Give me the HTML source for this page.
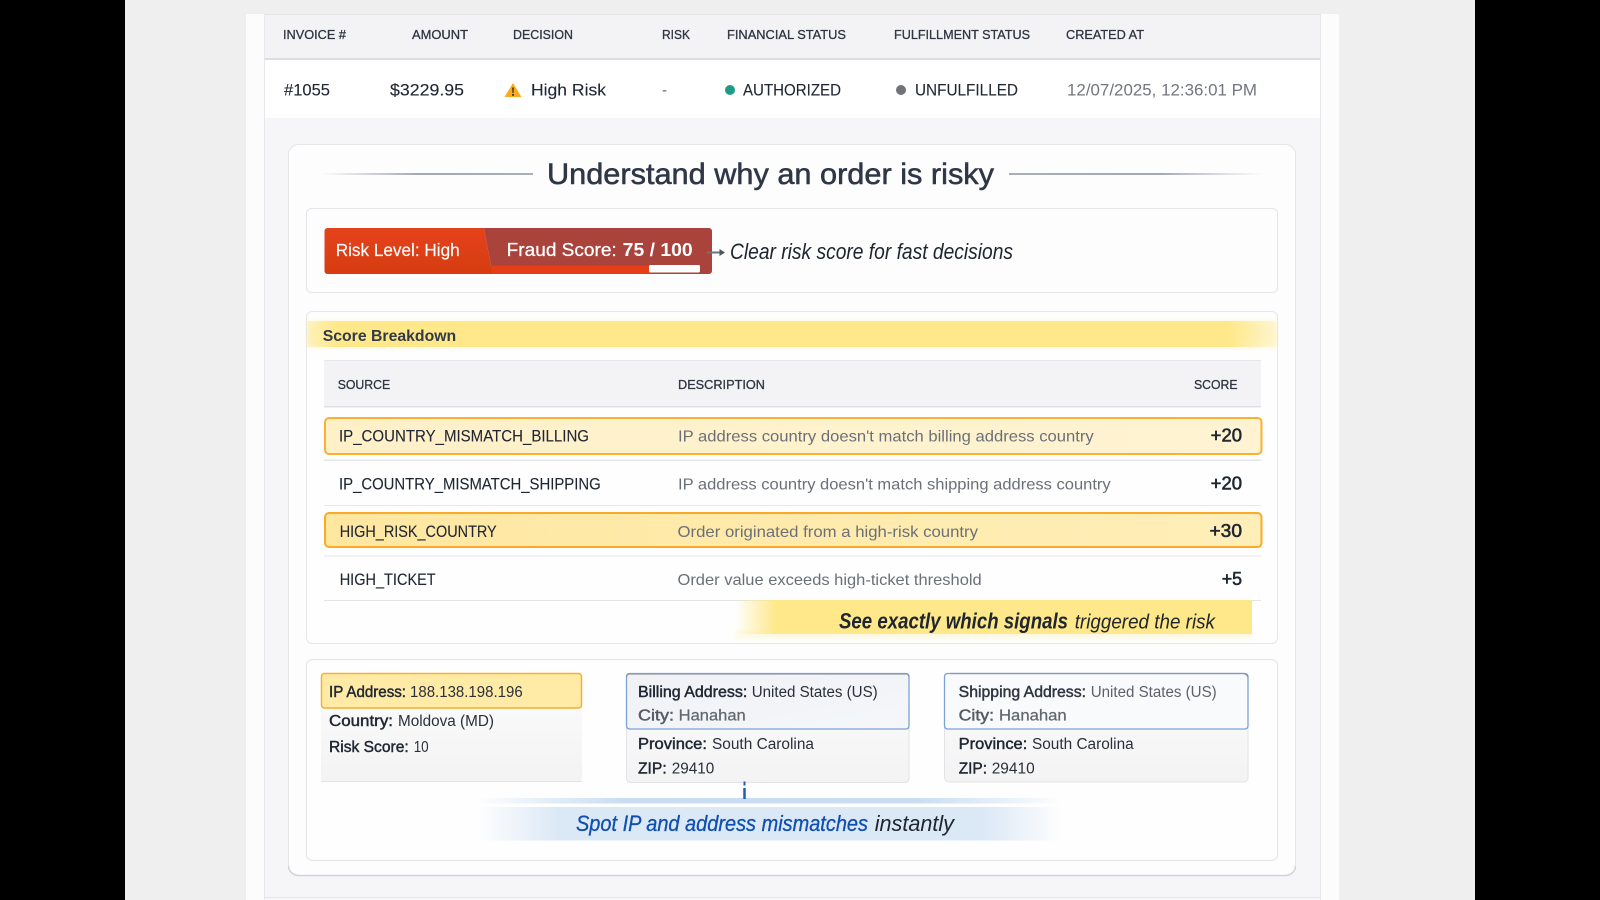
<!DOCTYPE html>
<html><head><meta charset="utf-8"><title>Understand why an order is risky</title>
<style>
html,body{margin:0;padding:0;background:#000;width:1600px;height:900px;overflow:hidden}
svg{display:block;filter:blur(.35px)}
text{font-family:"Liberation Sans",sans-serif;white-space:pre}
.h{font-size:13px;fill:#2f3542;stroke:#2f3542;stroke-width:.3}
.r{font-size:17px;fill:#1f2733;stroke:#1f2733;stroke-width:.12}
.s{font-size:16.5px;fill:#1f2733;stroke:#1f2733;stroke-width:.12}
.d{font-size:16px;fill:#6b7078}
.sc{font-size:18px;fill:#1f2733;stroke:#1f2733;stroke-width:.6}
.a{font-size:15.5px;fill:#2a303a}
.b{font-size:15.5px;fill:#1f2733;stroke:#1f2733;stroke-width:.45}
.it{font-size:22px;font-style:italic;fill:#20262f}
</style></head><body>
<svg xmlns="http://www.w3.org/2000/svg" width="1600" height="900" viewBox="0 0 1600 900">
<defs>
<linearGradient id="lineL" x1="0" x2="1" y1="0" y2="0"><stop offset="0" stop-color="#a9adb9" stop-opacity="0"/><stop offset=".45" stop-color="#a5a9b6"/><stop offset="1" stop-color="#aaaeb9"/></linearGradient>
<linearGradient id="lineR" x1="0" x2="1" y1="0" y2="0"><stop offset="0" stop-color="#aaaeb9"/><stop offset=".6" stop-color="#a5a9b6"/><stop offset="1" stop-color="#a9adb9" stop-opacity="0"/></linearGradient>
<linearGradient id="band" x1="0" x2="1" y1="0" y2="0"><stop offset="0" stop-color="#ffe88a" stop-opacity=".35"/><stop offset=".03" stop-color="#ffe88a"/><stop offset=".95" stop-color="#ffe88a"/><stop offset="1" stop-color="#ffe88a" stop-opacity=".1"/></linearGradient>
<linearGradient id="row1" x1="0" x2="1" y1="0" y2="0"><stop offset="0" stop-color="#fff0c8"/><stop offset="1" stop-color="#fff3d2"/></linearGradient>
<linearGradient id="row3" x1="0" x2="1" y1="0" y2="0"><stop offset="0" stop-color="#ffe7a0"/><stop offset="1" stop-color="#ffeeb8"/></linearGradient>
<linearGradient id="call" x1="0" x2="1" y1="0" y2="0"><stop offset="0" stop-color="#ffe88a" stop-opacity="0"/><stop offset=".08" stop-color="#ffe88a"/><stop offset="1" stop-color="#ffe88a"/></linearGradient>
<linearGradient id="blue" x1="0" x2="1" y1="0" y2="0"><stop offset="0" stop-color="#dbe8f6" stop-opacity="0"/><stop offset=".14" stop-color="#dbe8f6"/><stop offset=".86" stop-color="#dbe8f6"/><stop offset="1" stop-color="#dbe8f6" stop-opacity="0"/></linearGradient>
<linearGradient id="blue2" x1="0" x2="1" y1="0" y2="0"><stop offset="0" stop-color="#c6dbf2" stop-opacity="0"/><stop offset=".25" stop-color="#c9ddf2"/><stop offset=".75" stop-color="#c9ddf2"/><stop offset="1" stop-color="#c6dbf2" stop-opacity="0"/></linearGradient>
<linearGradient id="gray" x1="0" x2="0" y1="0" y2="1"><stop offset="0" stop-color="#fafafb"/><stop offset="1" stop-color="#f3f3f4"/></linearGradient>
<linearGradient id="bill" x1="0" x2="1" y1="0" y2="1"><stop offset="0" stop-color="#f0f1f4"/><stop offset="1" stop-color="#f4f7fb"/></linearGradient>
<linearGradient id="red" x1="0" x2="0" y1="0" y2="1"><stop offset="0" stop-color="#e5421c"/><stop offset="1" stop-color="#d63c10"/></linearGradient>
<filter id="soft" x="-10%" y="-50%" width="120%" height="200%"><feGaussianBlur stdDeviation="3"/></filter>
</defs>

<rect width="1600" height="900" fill="#000"/>
<rect x="125" width="1350" height="900" fill="#efeff0"/>
<rect x="246" y="14" width="1093" height="886" fill="#fcfcfd"/>
<rect x="264" y="14" width="1057" height="886" fill="#f6f6f8"/>
<rect x="264" y="14" width="1057" height="45" fill="#f3f3f5"/>
<rect x="264" y="14" width="1057" height="1" fill="#e6e6ea"/>
<rect x="264" y="58" width="1057" height="2" fill="#dcdde1"/>
<rect x="264" y="60" width="1057" height="58" fill="#fff"/>
<rect x="264" y="14" width="1" height="886" fill="#e8e8ec"/>
<rect x="1320" y="14" width="1" height="886" fill="#e8e8ec"/>
<rect x="264" y="897" width="1057" height="1" fill="#e6e6ea"/>

<text class="h" x="283" y="38.8" textLength="63" lengthAdjust="spacingAndGlyphs">INVOICE #</text>
<text class="h" x="412" y="38.8" textLength="56" lengthAdjust="spacingAndGlyphs">AMOUNT</text>
<text class="h" x="513" y="38.8" textLength="60" lengthAdjust="spacingAndGlyphs">DECISION</text>
<text class="h" x="662" y="38.8" textLength="28" lengthAdjust="spacingAndGlyphs">RISK</text>
<text class="h" x="727" y="38.8" textLength="119" lengthAdjust="spacingAndGlyphs">FINANCIAL STATUS</text>
<text class="h" x="894" y="38.8" textLength="136" lengthAdjust="spacingAndGlyphs">FULFILLMENT STATUS</text>
<text class="h" x="1066" y="38.8" textLength="78" lengthAdjust="spacingAndGlyphs">CREATED AT</text>

<text class="r" x="284" y="95.5" textLength="46" lengthAdjust="spacingAndGlyphs">#1055</text>
<text class="r" x="390" y="95.5" textLength="74" lengthAdjust="spacingAndGlyphs">$3229.95</text>
<path d="M513 83 L521.500 97 L504.500 97 Z" fill="#fbab1f"/>
<path d="M512.200 87.500h1.600l-.3 5.600h-1z M512.100 94h1.800v1.800h-1.800z" fill="#3a2a10"/>
<text class="r" x="531" y="95.5" textLength="75" lengthAdjust="spacingAndGlyphs">High Risk</text>
<text class="r" x="662" y="95.5" style="fill:#6b7078;stroke:none" textLength="5" lengthAdjust="spacingAndGlyphs">-</text>
<circle cx="730" cy="90" r="5" fill="#1f9a87"/>
<text class="r" x="743" y="95.5" textLength="98" lengthAdjust="spacingAndGlyphs">AUTHORIZED</text>
<circle cx="901" cy="90" r="5" fill="#71737a"/>
<text class="r" x="915" y="95.5" textLength="103" lengthAdjust="spacingAndGlyphs">UNFULFILLED</text>
<text class="r" x="1067" y="95.5" style="fill:#72767e;stroke:none" textLength="190" lengthAdjust="spacingAndGlyphs">12/07/2025, 12:36:01 PM</text>

<!-- main card -->
<rect x="288.500" y="144.500" width="1007" height="731" rx="10" fill="#fdfdfe" stroke="#e4e5e9"/>
<path d="M288.500 866a10 10 0 0 0 10 9.500H1285.500a10 10 0 0 0 10-9.500" fill="none" stroke="#d4d5d9" stroke-width="1.600"/>
<rect x="321" y="173" width="212" height="2" fill="url(#lineL)"/>
<rect x="1009" y="173" width="253" height="2" fill="url(#lineR)"/>
<text x="547" y="184" font-size="30" fill="#2f3747" stroke="#2f3747" stroke-width=".55" textLength="447" lengthAdjust="spacingAndGlyphs">Understand why an order is risky</text>

<!-- box 1 -->
<rect x="306.500" y="208.500" width="971" height="84" rx="5" fill="#fdfdfe" stroke="#e5e6ea"/>
<path d="M324.500 231a3 3 0 0 1 3-3H484l7 38v8H327.500a3 3 0 0 1-3-3z" fill="url(#red)"/>
<path d="M484 228H709a3 3 0 0 1 3 3v40a3 3 0 0 1-3 3H491v-8z" fill="#a9433b"/>
<path d="M491 265.500H650v8.500H492z" fill="#e73d18"/>
<rect x="649" y="265" width="51" height="7.500" rx="1.500" fill="#fff"/>
<text x="335.700" y="256" font-size="17.500" fill="#fff" stroke="#fff" stroke-width=".15" textLength="124" lengthAdjust="spacingAndGlyphs">Risk Level: High</text>
<text x="506.700" y="256" font-size="18" fill="#fff" stroke="#fff" stroke-width=".25" textLength="110" lengthAdjust="spacingAndGlyphs">Fraud Score:</text>
<text x="622.700" y="256" font-size="18" font-weight="700" fill="#fff" textLength="70" lengthAdjust="spacingAndGlyphs">75 / 100</text>
<path d="M707 252.500h13" stroke="#6c7580" stroke-width="2"/>
<path d="M719.500 249l5.500 3.500-5.500 3.500z" fill="#4c5560"/>
<text class="it" x="730" y="259" textLength="283" lengthAdjust="spacingAndGlyphs">Clear risk score for fast decisions</text>

<!-- score breakdown -->
<rect x="306.500" y="311.500" width="971" height="332" rx="6" fill="#fefefe" stroke="#e5e6ea"/>
<rect x="307" y="321" width="970" height="26" fill="#ffe88a" opacity=".35" filter="url(#soft)"/>
<rect x="307" y="321" width="970" height="26" fill="url(#band)"/>
<text x="322.700" y="341" font-size="16" font-weight="700" fill="#333a47" textLength="133.500" lengthAdjust="spacingAndGlyphs">Score Breakdown</text>
<rect x="324" y="360" width="937" height="47" fill="#f3f3f5"/>
<rect x="324" y="360" width="937" height="1" fill="#e8e8eb"/>
<rect x="324" y="406" width="937" height="1.500" fill="#dfe0e3"/>
<text class="h" x="337.700" y="389" textLength="52.500" lengthAdjust="spacingAndGlyphs">SOURCE</text>
<text class="h" x="678" y="389" textLength="87" lengthAdjust="spacingAndGlyphs">DESCRIPTION</text>
<text class="h" x="1194" y="389" textLength="43.500" lengthAdjust="spacingAndGlyphs">SCORE</text>

<rect x="325" y="418" width="936.500" height="36" rx="4" fill="url(#row1)" stroke="#fbb033" stroke-width="2"/>
<rect x="324" y="459.500" width="937" height="1.500" fill="#e6e7ea"/>
<rect x="324" y="505" width="937" height="1" fill="#e8e9eb"/>
<rect x="325" y="513" width="936.500" height="34" rx="4" fill="url(#row3)" stroke="#fbaa28" stroke-width="2"/>
<rect x="324" y="555.500" width="937" height="1" fill="#e6e7ea"/>
<rect x="324" y="600" width="937" height="1" fill="#e2e3e6"/>
<rect x="735" y="632" width="517" height="6" fill="#ffe88a" opacity=".3" filter="url(#soft)"/>
<rect x="735" y="600" width="517" height="34" fill="url(#call)"/>

<text class="s" x="339" y="441.700" textLength="250" lengthAdjust="spacingAndGlyphs">IP_COUNTRY_MISMATCH_BILLING</text>
<text class="d" x="678" y="441.700" textLength="415.700" lengthAdjust="spacingAndGlyphs">IP address country doesn't match billing address country</text>
<text class="sc" x="1210.700" y="441.700" textLength="31.300" lengthAdjust="spacingAndGlyphs">+20</text>
<text class="s" x="339" y="489.700" textLength="261.700" lengthAdjust="spacingAndGlyphs">IP_COUNTRY_MISMATCH_SHIPPING</text>
<text class="d" x="678" y="489.700" textLength="432.700" lengthAdjust="spacingAndGlyphs">IP address country doesn't match shipping address country</text>
<text class="sc" x="1210.700" y="489.700" textLength="31.300" lengthAdjust="spacingAndGlyphs">+20</text>
<text class="s" x="339.700" y="537" textLength="157" lengthAdjust="spacingAndGlyphs">HIGH_RISK_COUNTRY</text>
<text class="d" x="677.500" y="537" textLength="300.500" lengthAdjust="spacingAndGlyphs">Order originated from a high-risk country</text>
<text class="sc" x="1209.500" y="537" textLength="32.500" lengthAdjust="spacingAndGlyphs">+30</text>
<text class="s" x="339.700" y="585" textLength="96" lengthAdjust="spacingAndGlyphs">HIGH_TICKET</text>
<text class="d" x="677.500" y="585" textLength="304.200" lengthAdjust="spacingAndGlyphs">Order value exceeds high-ticket threshold</text>
<text class="sc" x="1221.700" y="585" textLength="20.300" lengthAdjust="spacingAndGlyphs">+5</text>

<text x="839" y="628.500" font-size="22" font-style="italic" font-weight="700" fill="#20262f" textLength="229" lengthAdjust="spacingAndGlyphs">See exactly which signals</text>
<text x="1074.700" y="628.500" font-size="20.500" font-style="italic" fill="#20262f" textLength="140.300" lengthAdjust="spacingAndGlyphs">triggered the risk</text>

<!-- address box -->
<rect x="306.500" y="659.500" width="971" height="201" rx="6" fill="#fefefe" stroke="#e3e4e8"/>

<rect x="321" y="700" width="261" height="82" rx="3" fill="url(#gray)"/>
<rect x="321" y="781" width="261" height="1" fill="#e3e3e6"/>
<rect x="321.500" y="673.500" width="260" height="34.500" rx="3" fill="#ffeba6" stroke="#f9ae2e" stroke-width="1.500"/>
<text class="b" x="329" y="697" textLength="77" lengthAdjust="spacingAndGlyphs">IP Address:</text>
<text class="a" x="410" y="697" textLength="112.700" lengthAdjust="spacingAndGlyphs">188.138.198.196</text>
<text class="b" x="329" y="726" textLength="64" lengthAdjust="spacingAndGlyphs">Country:</text>
<text class="a" x="398" y="726" textLength="96" lengthAdjust="spacingAndGlyphs">Moldova (MD)</text>
<text class="b" x="329" y="752" textLength="79.700" lengthAdjust="spacingAndGlyphs">Risk Score:</text>
<text class="a" x="413.700" y="752" textLength="15" lengthAdjust="spacingAndGlyphs">10</text>

<rect x="626.500" y="700" width="282.500" height="82.500" rx="4" fill="url(#gray)" stroke="#e2e3e6"/>
<rect x="626.500" y="673.500" width="282.500" height="55.500" rx="3" fill="url(#bill)" stroke="#7ba3d6" stroke-width="1.300"/>
<path d="M626.500 677a3 3 0 0 1 3-3H906a3 3 0 0 1 3 3" fill="none" stroke="#8f97a3" stroke-width="1.300"/>
<text class="b" x="638" y="697" textLength="109.300" lengthAdjust="spacingAndGlyphs">Billing Address:</text>
<text class="a" x="751.700" y="697" textLength="126" lengthAdjust="spacingAndGlyphs">United States (US)</text>
<text class="b" x="638" y="720.300" style="fill:#555c66;stroke:#555c66" textLength="36" lengthAdjust="spacingAndGlyphs">City:</text>
<text class="a" x="678.700" y="720.300" style="fill:#62676f;stroke:#62676f;stroke-width:.25" textLength="67" lengthAdjust="spacingAndGlyphs">Hanahan</text>
<text class="b" x="638" y="749" textLength="69" lengthAdjust="spacingAndGlyphs">Province:</text>
<text class="a" x="712" y="749" textLength="102" lengthAdjust="spacingAndGlyphs">South Carolina</text>
<text class="b" x="638" y="773.700" textLength="28.700" lengthAdjust="spacingAndGlyphs">ZIP:</text>
<text class="a" x="671.700" y="773.700" textLength="42.600" lengthAdjust="spacingAndGlyphs">29410</text>

<rect x="944.500" y="700" width="303.500" height="82" rx="4" fill="url(#gray)" stroke="#e2e3e6"/>
<rect x="944.500" y="673.500" width="303.500" height="55.500" rx="3" fill="#f9fafc" stroke="#7ba3d6" stroke-width="1.300"/>
<path d="M950 673.500H1243a5 5 0 0 1 5 5" fill="none" stroke="#8f97a3" stroke-width="1.200"/>
<text class="b" x="958.700" y="697" style="fill:#2f3540;stroke:#2f3540" textLength="127.300" lengthAdjust="spacingAndGlyphs">Shipping Address:</text>
<text class="a" x="1090.700" y="697" style="fill:#5c626b" textLength="126" lengthAdjust="spacingAndGlyphs">United States (US)</text>
<text class="b" x="958.700" y="720.300" style="fill:#555c66;stroke:#555c66" textLength="35.300" lengthAdjust="spacingAndGlyphs">City:</text>
<text class="a" x="999" y="720.300" style="fill:#62676f;stroke:#62676f;stroke-width:.25" textLength="67.700" lengthAdjust="spacingAndGlyphs">Hanahan</text>
<text class="b" x="958.700" y="749" textLength="68.600" lengthAdjust="spacingAndGlyphs">Province:</text>
<text class="a" x="1032" y="749" textLength="101.700" lengthAdjust="spacingAndGlyphs">South Carolina</text>
<text class="b" x="958.700" y="773.700" textLength="28.300" lengthAdjust="spacingAndGlyphs">ZIP:</text>
<text class="a" x="991.700" y="773.700" textLength="43" lengthAdjust="spacingAndGlyphs">29410</text>

<!-- connector -->
<rect x="477" y="798" width="586" height="5.500" fill="url(#blue2)"/>
<rect x="477" y="807" width="586" height="33.500" fill="url(#blue)"/>
<path d="M744.500 781.500v4" stroke="#1760c0" stroke-width="2"/>
<path d="M744.500 788v11" stroke="#1760c0" stroke-width="2.500"/>
<text x="576" y="831" font-size="22" font-style="italic" fill="#0f4fb0" stroke="#0f4fb0" stroke-width=".3" textLength="292" lengthAdjust="spacingAndGlyphs">Spot IP and address mismatches</text>
<text x="874.700" y="831" font-size="22" font-style="italic" fill="#20262f" textLength="79.300" lengthAdjust="spacingAndGlyphs">instantly</text>
</svg>
</body></html>
